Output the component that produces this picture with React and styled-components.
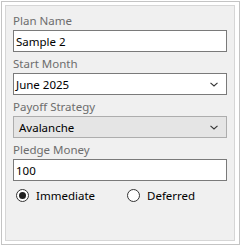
import React from "react";
import styled, { createGlobalStyle } from "styled-components";

const GlobalStyle = createGlobalStyle`
  html, body {
    margin: 0;
    padding: 0;
    background: #ffffff;
  }
  body {
    font-family: "Noto Sans", "Open Sans", sans-serif;
  }
`;

const Window = styled.div`
  width: 240px;
  height: 246px;
  padding-top: 1px;
  padding-left: 1px;
  box-sizing: border-box;
  background: #ffffff;
`;

const Frame = styled.div`
  width: 239px;
  height: 244px;
  box-sizing: border-box;
  border: 1px solid #c4c4c4;
  padding: 3px 4px 3px 3px;
`;

const Panel = styled.div`
  height: 100%;
  box-sizing: border-box;
  border: 1px solid #d6d6d6;
  background: #f0f0f0;
  padding: 3px 7px 0 7px;
  display: flex;
  flex-direction: column;
`;

const Label = styled.div`
  height: 21px;
  box-sizing: border-box;
  padding-top: 4px;
  font-size: 11.5px;
  line-height: 16px;
  color: #6d6d6d;
`;

const Field = styled.div`
  height: 22px;
  box-sizing: border-box;
  border: 1px solid ${({ $combo }) => ($combo ? "#adadad" : "#7a7a7a")};
  background: ${({ $combo }) => ($combo ? "#e5e5e5" : "#ffffff")};
  display: flex;
  align-items: center;
  justify-content: space-between;
  padding: 0 8px 0 ${({ $combo }) => ($combo ? "5px" : "2px")};
  font-size: 11.5px;
  color: #000000;
`;

const Chevron = styled.svg`
  width: 8px;
  height: 5px;
  flex: none;
`;

const RadioRow = styled.div`
  display: flex;
  align-items: center;
  height: 26px;
  margin-top: 1px;
  padding-left: 3px;
`;

const RadioItem = styled.div`
  display: flex;
  align-items: center;
  gap: 7px;
  width: ${({ $width }) => $width || "auto"};
  font-size: 11.5px;
  color: #000000;
`;

const Circle = styled.span`
  width: 13px;
  height: 13px;
  box-sizing: border-box;
  border-radius: 50%;
  border: 1px solid #333333;
  background: #ffffff;
  display: flex;
  align-items: center;
  justify-content: center;

  &::after {
    content: "";
    width: 7px;
    height: 7px;
    border-radius: 50%;
    background: #1f1f1f;
    display: ${({ $checked }) => ($checked ? "block" : "none")};
  }
`;

const Down = () => (
  <Chevron viewBox="0 0 8 5">
    <polyline points="0.5,0.8 4,4 7.5,0.8" fill="none" stroke="#333" strokeWidth="1.1" />
  </Chevron>
);

const App = () => {
  return (
    <Window>
      <GlobalStyle />
      <Frame>
        <Panel>
          <Label>Plan Name</Label>
          <Field>Sample 2</Field>
          <Label>Start Month</Label>
          <Field>
            June 2025
            <Down />
          </Field>
          <Label>Payoff Strategy</Label>
          <Field $combo>
            Avalanche
            <Down />
          </Field>
          <Label>Pledge Money</Label>
          <Field>100</Field>
          <RadioRow>
            <RadioItem $width="111px">
              <Circle $checked />
              Immediate
            </RadioItem>
            <RadioItem>
              <Circle />
              Deferred
            </RadioItem>
          </RadioRow>
        </Panel>
      </Frame>
    </Window>
  );
};

export default App;
